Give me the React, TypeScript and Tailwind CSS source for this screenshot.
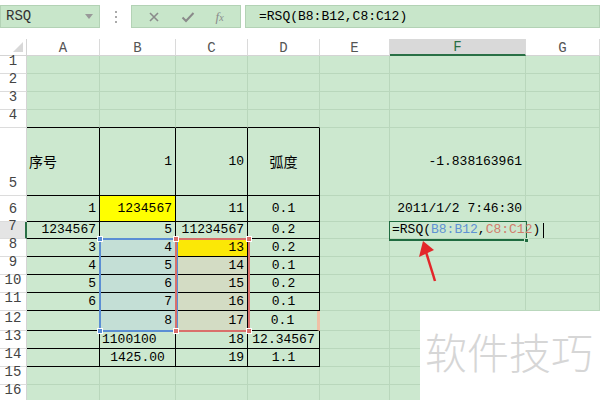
import React from "react";

type Cell = { t?: string; a?: "l" | "c" | "r"; bg?: string };

const colNames = ["A", "B", "C", "D", "E", "F", "G"];

// rows 5..14, columns A..D of the bordered table
const table: Cell[][] = [
  [{ t: "序号", a: "l" }, { t: "1", a: "r" }, { t: "10", a: "r" }, { t: "弧度", a: "c" }],
  [{ t: "1", a: "r" }, { t: "1234567", a: "r", bg: "bg-[#ffff00]" }, { t: "11", a: "r" }, { t: "0.1", a: "c" }],
  [{ t: "1234567", a: "r" }, { t: "5", a: "r" }, { t: "11234567", a: "r" }, { t: "0.2", a: "c" }],
  [{ t: "3", a: "r" }, { t: "4", a: "r", bg: "bg-[#c4dfd6]" }, { t: "13", a: "r", bg: "bg-[#fbe806]" }, { t: "0.2", a: "c" }],
  [{ t: "4", a: "r" }, { t: "5", a: "r", bg: "bg-[#c4dfd6]" }, { t: "14", a: "r", bg: "bg-[#d3dcc4]" }, { t: "0.1", a: "c" }],
  [{ t: "5", a: "r" }, { t: "6", a: "r", bg: "bg-[#c4dfd6]" }, { t: "15", a: "r", bg: "bg-[#d3dcc4]" }, { t: "0.2", a: "c" }],
  [{ t: "6", a: "r" }, { t: "7", a: "r", bg: "bg-[#c4dfd6]" }, { t: "16", a: "r", bg: "bg-[#d3dcc4]" }, { t: "0.1", a: "c" }],
  [{}, { t: "8", a: "r", bg: "bg-[#c4dfd6]" }, { t: "17", a: "r", bg: "bg-[#d3dcc4]" }, { t: "0.1", a: "c" }],
  [{}, { t: "1100100", a: "l" }, { t: "18", a: "r" }, { t: "12.34567", a: "c" }],
  [{}, { t: "1425.00", a: "c" }, { t: "19", a: "r" }, { t: "1.1", a: "c" }],
];

const mono = "font-['Liberation_Mono','Noto_Sans_CJK_SC',monospace]";

function cellAt(r: number, c: number): Cell {
  if (r >= 5 && r <= 14 && c <= 3) return table[r - 5][c];
  if (c === 5 && r === 5) return { t: "-1.838163961", a: "r" };
  if (c === 5 && r === 6) return { t: "2011/1/2 7:46:30", a: "r" };
  return {};
}

function Formula() {
  return (
    <span className="flex items-center whitespace-nowrap">
      =RSQ(<span className="text-[#5f93d3]">B8:B12</span>,<span className="text-[#d27d6c]">C8:C12</span>)
      <span className="ml-[3px] w-px h-[15px] bg-black" />
    </span>
  );
}

function Sheet() {
  const cells: React.ReactNode[] = [];
  // header row
  cells.push(
    <div key="corner" className="flex items-end justify-end p-[3px] bg-white border-r border-b border-[#d4d4d4]">
      <div className="w-0 h-0 border-l-[10px] border-l-transparent border-b-[10px] border-b-[#d8d8d8]" />
    </div>
  );
  colNames.forEach((n) => {
    const sel = n === "F";
    cells.push(
      <div
        key={"h" + n}
        className={`flex items-center justify-center pt-[2px] text-[14px] ${
          sel ? "bg-[#d9d9d9] border-b-2 border-b-[#2a7046] text-[#2a7046]" : "bg-white border-b border-b-[#d4d4d4] text-[#555]"
        } border-r border-r-[#dadada]`}
      >
        {n}
      </div>
    );
  });

  for (let r = 1; r <= 16; r++) {
    const selRow = r === 7;
    cells.push(
      <div
        key={"r" + r}
        className={`flex items-end justify-center pb-[1px] text-[14px] text-[#444] border-b border-b-[#dcdcdc] ${
          selRow ? "bg-[#e4e4e4] border-r-2 border-r-[#2a7046]" : "bg-white border-r border-r-[#d4d4d4]"
        }`}
      >
        {r}
      </div>
    );
    for (let c = 0; c < 7; c++) {
      const inTable = r >= 5 && r <= 14 && c <= 3;
      const topOfTable = r === 4 && c <= 3;
      const odd = r === 12 && c === 3;
      const active = r === 7 && c === 5;
      const cell = cellAt(r, c);
      const align =
        cell.a === "r" ? "justify-end pr-[3px]" : cell.a === "c" ? "justify-center" : "justify-start pl-[2px]";
      cells.push(
        <div
          key={r + "-" + c}
          className={`flex items-center overflow-visible whitespace-nowrap text-[13px] text-black border-b ${
            odd ? "border-r-[3px] border-r-[#f0c0a6] border-b-black" : inTable ? "border-r border-r-black border-b-black" : topOfTable ? "border-r border-r-[#b9d7bc] border-b-black" : "border-r border-r-[#b9d7bc] border-b-[#b9d7bc]"
          } ${cell.bg ?? "bg-[#cce8cf]"} ${align} ${active ? "relative z-[1]" : ""}`}
        >
          {active ? <Formula /> : cell.t === "序号" || cell.t === "弧度" ? (
            <span className="text-[14px] font-['Noto_Sans_CJK_SC',sans-serif]">{cell.t}</span>
          ) : (
            cell.t
          )}
        </div>
      );
    }
  }

  return (
    <div className="grid grid-cols-[27px_73px_76px_72px_72px_70px_136px_74px] grid-rows-[17px_18px_18px_18px_18px_68px_26px_17px_18px_18px_18px_18px_20px_18px_18px_18px_18px]">
      {cells}
    </div>
  );
}

function Handle({ className }: { className: string }) {
  return <div className={`absolute w-[6px] h-[6px] border border-white ${className}`} />;
}

export default function App() {
  return (
    <div className={`relative w-[600px] h-[400px] overflow-hidden bg-white ${mono}`}>
      {/* top bar */}
      <div className="h-[39px] flex items-start pt-[5px]">
        <div className="w-[100px] h-[23px] bg-[#c8e6ca] border border-[#b3d2b5] flex items-center justify-between pl-[5px] pr-[6px]">
          <span className="text-[14px] text-[#333]">RSQ</span>
          <span className="w-0 h-0 border-l-[4px] border-r-[4px] border-t-[5px] border-l-transparent border-r-transparent border-t-[#999]" />
        </div>
        <div className="w-[31px] h-[23px] flex flex-col items-center justify-center gap-[3px]">
          <span className="w-[2px] h-[2px] bg-[#aaa]" />
          <span className="w-[2px] h-[2px] bg-[#aaa]" />
          <span className="w-[2px] h-[2px] bg-[#aaa]" />
        </div>
        <div className="w-[110px] h-[23px] bg-[#c8e6ca] border border-[#b3d2b5] flex items-center justify-around px-[6px] text-[#8a8a8a]">
          <svg width="12" height="12" viewBox="0 0 12 12">
            <path d="M2 2 L10 10 M10 2 L2 10" stroke="#8a8a8a" strokeWidth="1.6" />
          </svg>
          <svg width="14" height="12" viewBox="0 0 14 12">
            <path d="M1.5 6.5 L5 10 L12.5 2" stroke="#8a8a8a" strokeWidth="2" fill="none" />
          </svg>
          <span className="italic text-[13px] font-['Liberation_Serif',serif]">
            f<span className="text-[10px]">x</span>
          </span>
        </div>
        <div className="ml-[4px] flex-1 h-[23px] bg-[#c8e6ca] border border-[#b3d2b5] flex items-center pl-[13px] text-[13px] text-black">
          =RSQ(B8:B12,C8:C12)
        </div>
      </div>

      <Sheet />

      {/* range outlines drawn over the cells */}
      <div className="absolute left-[99px] top-[238px] w-[79px] h-[94px] border-2 border-[#5b8ed4]">
        <Handle className="-left-[4px] -top-[4px] bg-[#5b8ed4]" />
        <Handle className="-left-[4px] -bottom-[4px] bg-[#5b8ed4]" />
      </div>
      <div className="absolute left-[175px] top-[238px] w-[75px] h-[94px] border-2 border-[#d9706b]">
        <Handle className="-left-[4px] -top-[4px] bg-[#d9706b]" />
        <Handle className="-right-[4px] -top-[4px] bg-[#d9706b]" />
        <Handle className="-left-[4px] -bottom-[4px] bg-[#d9706b]" />
        <Handle className="-right-[4px] -bottom-[4px] bg-[#d9706b]" />
      </div>

      {/* active cell */}
      <div className="absolute left-[389px] top-[221px] w-[138px] h-[20px] border-2 border-[#1f6b40]">
        <div className="absolute -right-[4px] -bottom-[4px] w-[5px] h-[5px] bg-[#1f6b40] border border-[#cce8cf]" />
      </div>

      {/* arrow */}
      <svg className="absolute left-0 top-0 pointer-events-none" width="600" height="400">
        <line x1="435" y1="281" x2="426" y2="252" stroke="#e3262a" strokeWidth="2.5" />
        <polygon points="423,241 419,257 434,250" fill="#e3262a" />
      </svg>

      {/* watermark */}
      <div className="absolute left-[420px] top-[311px] w-[180px] h-[89px] bg-white pl-[5px] pt-[19px]">
        <span className="text-[42px] leading-none text-[#d6d6d6] font-['Noto_Sans_CJK_SC',sans-serif] font-light whitespace-nowrap">
          软件技巧
        </span>
      </div>
    </div>
  );
}
